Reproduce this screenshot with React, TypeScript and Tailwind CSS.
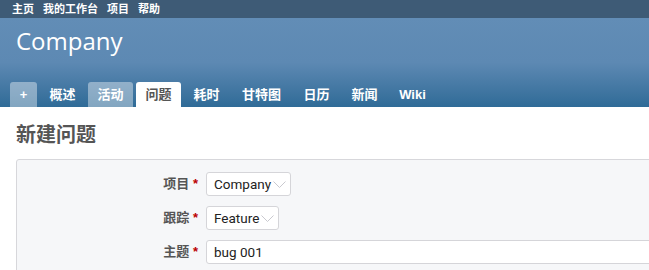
const cjk = "font-['Liberation_Sans','Noto_Sans_CJK_SC',sans-serif]";

const tabs = [
  { label: "概述", w: "w-[45px]" },
  { label: "活动", w: "w-[45px]", hover: true },
  { label: "问题", w: "w-[45px]", selected: true },
  { label: "耗时", w: "w-[45px]" },
  { label: "甘特图", w: "w-[59px]" },
  { label: "日历", w: "w-[45px]" },
  { label: "新闻", w: "w-[45px]" },
  { label: "Wiki", w: "w-[45px]" },
];

function Chevron() {
  return (
    <svg width="13" height="8" viewBox="0 0 13 8" className="ml-[2px] mt-[1px]" fill="none">
      <polyline points="0.5,0.5 6.5,6.5 12.5,0.5" stroke="#c9c9cf" strokeWidth="1" />
    </svg>
  );
}

function Select({ value }: { value: string }) {
  return (
    <div className="h-[24px] flex items-center bg-white border border-[#d5d5d9] rounded-[3px] pl-[7px] pr-[4px] text-[13.5px] text-[#222] font-['Roboto',sans-serif]">
      <span>{value}</span>
      <Chevron />
    </div>
  );
}

function Label({ text }: { text: string }) {
  return (
    <label className="w-[189px] text-right pr-[8px] text-[13px] font-bold text-[#555]">
      {text} <span className="text-[#bb0000]">*</span>
    </label>
  );
}

export default function App() {
  return (
    <div className={`w-[649px] h-[270px] overflow-hidden bg-white ${cjk}`}>
      <div className="w-[1000px]">
        {/* Top menu */}
        <div className="h-[18px] bg-[#3e5b76] flex items-center gap-[9px] pl-[12px] text-[11px] font-bold text-white">
          <span>主页</span>
          <span>我的工作台</span>
          <span>项目</span>
          <span>帮助</span>
        </div>

        {/* Header */}
        <div className="h-[89px] bg-gradient-to-b from-[#628db6] via-[#5d89b3] to-[#2f6b97] flex flex-col">
          <h1 className="pl-[16px] pt-[8px] text-[24px] text-white font-['Open_Sans',sans-serif] leading-[30px]">Company</h1>
          <div className="mt-auto flex items-end gap-[3px] pl-[10px]">
            <div className="w-[27px] h-[25px] rounded-t-[3px] bg-white/40 flex items-center justify-center text-white text-[13px] font-bold">+</div>
            {tabs.map((t) => (
              <div
                key={t.label}
                className={`${t.w} h-[25px] rounded-t-[3px] flex items-center justify-center text-[13px] font-bold ${
                  t.selected ? "bg-white text-[#555]" : t.hover ? "bg-white/40 text-white" : "text-white"
                }`}
              >
                {t.label}
              </div>
            ))}
          </div>
        </div>

        {/* Content */}
        <div className="pl-[16px] pt-[16px]">
          <h2 className="text-[20px] font-bold text-[#555] leading-[24px]">新建问题</h2>
          <div className="mt-[12px] bg-[#f6f7f9] border border-[#d7d7db] rounded-[3px] pt-[12px] flex flex-col gap-[10px]">
            <div className="flex items-center">
              <Label text="项目" />
              <Select value="Company" />
            </div>
            <div className="flex items-center">
              <Label text="跟踪" />
              <Select value="Feature" />
            </div>
            <div className="flex items-center">
              <Label text="主题" />
              <div className="h-[24px] w-[600px] flex items-center bg-white border border-[#d5d5d9] rounded-[3px] pl-[7px] text-[13.5px] text-[#222] font-['Roboto',sans-serif]">
                bug 001
              </div>
            </div>
            <div className="h-[10px]" />
          </div>
        </div>
      </div>
    </div>
  );
}
